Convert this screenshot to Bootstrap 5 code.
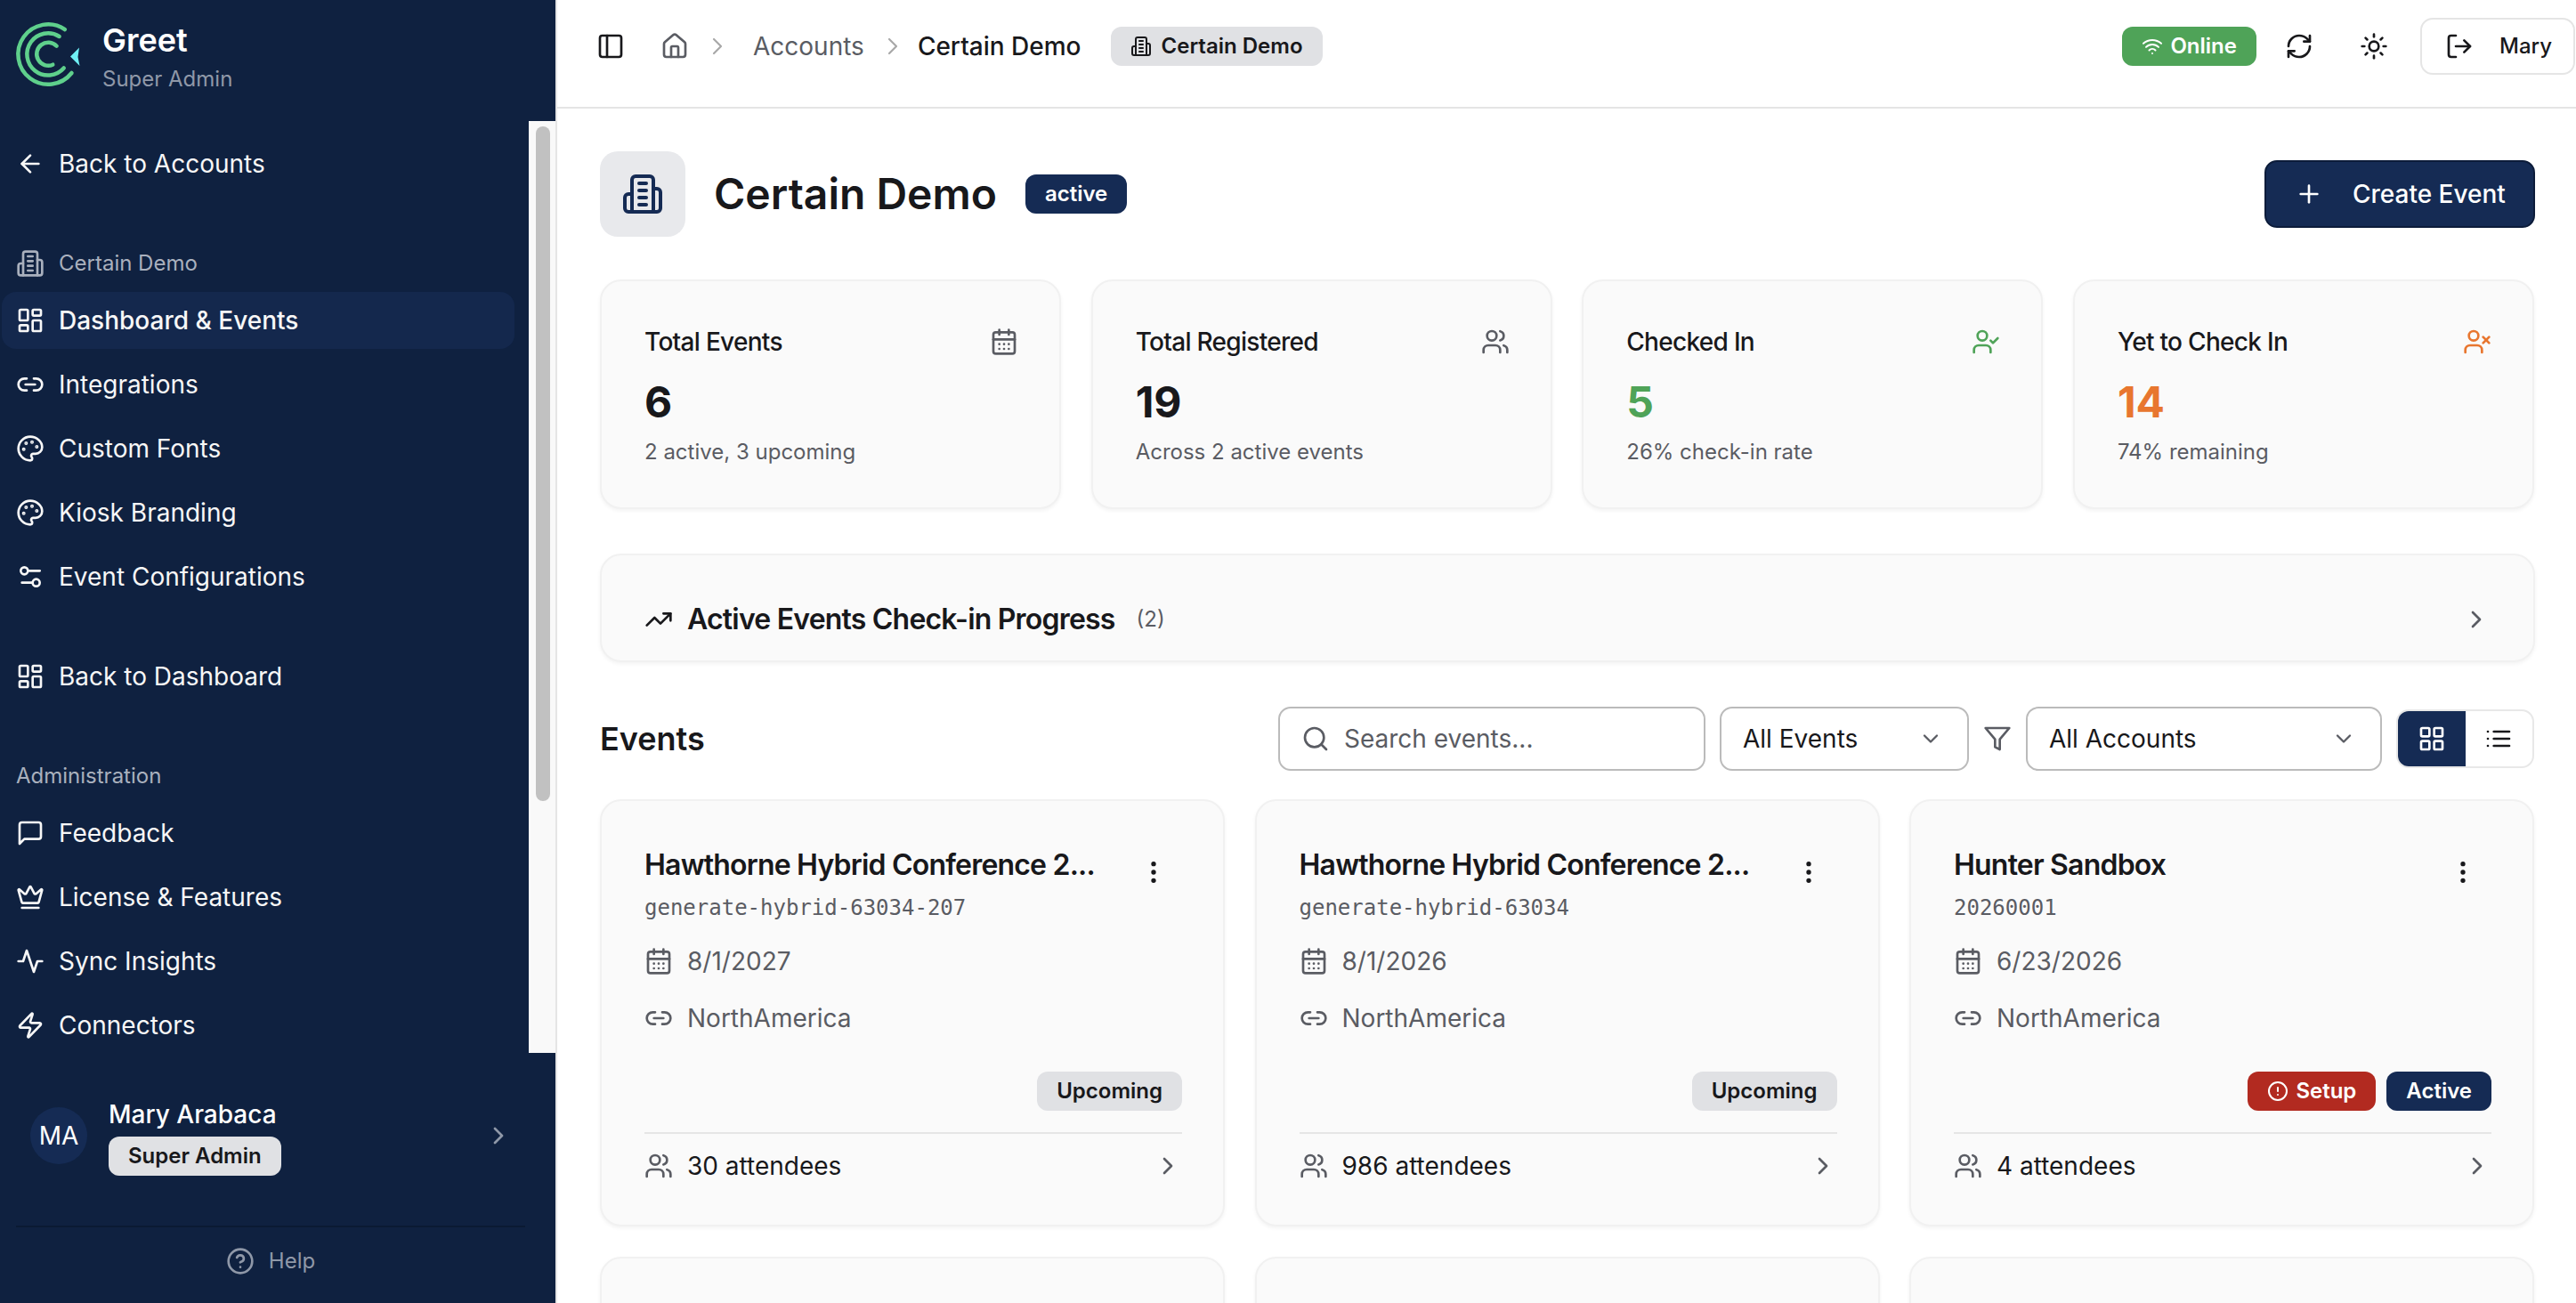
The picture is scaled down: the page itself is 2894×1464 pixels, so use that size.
<!DOCTYPE html>
<html lang="en">
<head>
<meta charset="utf-8">
<title>Certain Demo</title>
<link href="https://cdn.jsdelivr.net/npm/bootstrap@5.3.0/dist/css/bootstrap.min.css" rel="stylesheet">
<style>
html,body{height:100%;margin:0;overflow:hidden;background:#fff;}
body{font-family:Inter,"Noto Sans",sans-serif;font-size:28px;line-height:40px;color:#18181b;}
.ic{width:32px;height:32px;flex:none;fill:none;stroke:currentColor;stroke-width:2;stroke-linecap:round;stroke-linejoin:round;}
.ic-s{width:24px;height:24px;}
.shell{height:1464px;}
.side{width:626px;flex:none;background:#0f2140;border-right:2px solid #e5e5e5;color:#f7f7f7;}
.side-head{height:136px;flex:none;padding:24px 0 0 18px;gap:25px;}
.brand-logo{overflow:visible;flex:none;}
.brand-name{font-size:36px;line-height:44px;font-weight:600;color:#fff;margin-top:-1px;}
.brand-sub{font-size:24px;line-height:36px;color:#8f98a8;margin-top:4px;}
.side-mid{height:1047px;flex:none;overflow:hidden;}
.side-nav{width:594px;padding:16px 16px 0 2px;flex:none;}
.nav-row{height:64px;padding-left:16px;gap:16px;border-radius:16px;margin-bottom:8px;width:576px;white-space:nowrap;}
.nav-row.on{background:#14284d;font-weight:500;}
.nav-label{height:48px;padding-left:16px;gap:16px;margin-bottom:8px;font-size:24px;color:#a9b0bd;}
.gap-top{margin-top:56px;}
.gap-top2{margin-top:48px;}
.track{width:31px;flex:none;background:#f9f9f9;border-left:2px solid #fdfdfd;padding:6px 0 0 6px;}
.thumb{width:16px;height:758px;background:#c1c1c1;border-radius:8px;}
.user-box{height:194px;flex:none;padding:0 48px 8px 34px;}
.avatar{width:64px;height:64px;background:#152b54;border-radius:50%;color:#fff;font-size:28px;font-weight:400;margin-right:24px;}
.user-name{font-size:28px;line-height:40px;font-weight:500;color:#fff;margin-bottom:5px;}
.pill{font-size:24px;line-height:44px;height:44px;padding:0 22px;border-radius:12px;font-weight:600;display:inline-flex;align-items:center;white-space:nowrap;vertical-align:top;}
.pill-grey{background:#e0e1e4;color:#18181b;}
.pill-navy{background:#152b54;color:#fff;}
.pill-green{background:#4fa358;color:#fff;}
.pill-red{background:#b22a20;color:#fff;}
.pill-gap{gap:11px;margin-left:33px;}
.side-foot{margin:0 34px 0 18px;border-top:2px solid #0b1a33;height:85px;flex:none;padding-bottom:7px;color:#8f98a8;font-size:24px;gap:16px;}
.c-muted{color:#8f98a8;}
.main-pane{min-width:0;}
.top-bar{height:122px;flex:none;border-bottom:2px solid #e5e5e5;padding:0 1px 16px 44px;}
.crumb-home{color:#5a5c63;margin-left:40px;}
.crumb-sep{color:#a8a8a8;stroke-width:1.6;}
.crumb-link{color:#5a5c63;white-space:nowrap;}
.crumb-now{color:#18181b;font-weight:500;white-space:nowrap;margin-left:12px;}
.top-tools{gap:12px;}
.icon-slot{width:72px;height:64px;color:#18181b;}
.user-btn{width:174px;height:64px;border:2px solid #e5e5e5;border-radius:14px;padding:0 24px 0 26px;background:#fff;color:#18181b;font-size:24px;line-height:40px;font-weight:500;margin-left:4px;}
.pane-body{padding:48px 46px 0 48px;min-height:0;}
.page-head{height:96px;margin-bottom:48px;}
.head-ico{width:96px;height:96px;background:#e8e9ec;border-radius:20px;color:#152b54;margin-right:32px;}
.head-ico .ic{width:48px;height:48px;}
.page-title{font-size:48px;line-height:60px;font-weight:600;margin:0 32px 0 0;color:#18181b;}
.create-btn{width:304px;height:76px;background:#152b54;border:2px solid #0c1c3a;border-radius:14px;color:#fff;font-size:28px;line-height:40px;font-weight:500;padding:0 0 0 32px;gap:33px;}
.create-btn:hover{background:#152b54;color:#fff;border-color:#0c1c3a;}
.grid-4{display:grid;grid-template-columns:repeat(4,1fr);gap:33.5px;margin:0 1px 50px 0;}
.grid-3{display:grid;grid-template-columns:repeat(3,1fr);gap:33.5px;margin-right:1px;}
.tile{background:#fafafa;border:2px solid #f1f1f1;border-radius:24px;box-shadow:0 2px 4px rgba(0,0,0,.05);}
.stat-tile{height:258px;padding:48px 46px 48px 48px;}
.stat-top{height:40px;font-size:28px;line-height:40px;font-weight:500;letter-spacing:-.7px;}
.stat-num{font-size:48px;line-height:56px;font-weight:700;margin-top:20px;color:#18181b;}
.stat-sub{font-size:24px;line-height:36px;color:#5a5c63;margin-top:10px;}
.c-grey{color:#5a5c63;}
.c-green{color:#4fa358!important;}
.c-orange{color:#e8762f!important;}
.prog-tile{height:122px;padding:48px 48px 0;margin-bottom:50px;}
.prog-title{font-size:32px;line-height:48px;font-weight:600;margin:0 0 0 16px;letter-spacing:-.8px;}
.prog-count{font-size:24px;color:#5a5c63;margin-left:24px;}
.tools{height:72px;margin-bottom:32px;}
.tools-title{font-size:36px;line-height:48px;font-weight:600;margin:0;}
.search-box{width:480px;height:72px;border:2px solid #bbb;border-radius:14px;padding:0 24px;gap:16px;color:#5a5c63;background:#fff;}
.search-box input{border:0;outline:0;background:transparent;font-size:28px;width:100%;padding:0;color:#18181b;box-shadow:none;border-radius:0;}
.search-box input::placeholder{color:#5a5c63;opacity:1;}
.pick{height:72px;border:2px solid #bbb;border-radius:14px;padding:0 27px 0 24px;background:#fff;color:#18181b;font-size:28px;}
.pick .ic{color:#5a5c63;width:28px;height:28px;}
.pick-a{width:280px;}
.pick-b{width:400px;}
.view-tog{width:155px;height:66px;border:2px solid #e8e8e8;border-radius:14px;overflow:hidden;margin:0 1px 0 0;}
.view-tog span{width:76px;}
.view-tog .sel{background:#152b54;color:#fff;}
.ev-tile{height:480px;padding:50px 46px 0 48px;}
.ev-head{height:52px;}
.ev-title{font-size:32px;line-height:44px;font-weight:600;min-width:0;flex:1;color:#18181b;letter-spacing:-.8px;white-space:nowrap;}
.dots{width:64px;padding:14px 0 0 16px;margin-left:24px;flex:none;}
.ev-code{font-family:"DejaVu Sans Mono",monospace;font-size:24px;line-height:36px;color:#5a5c63;margin-bottom:22px;}
.ev-meta{height:40px;gap:16px;color:#5a5c63;font-size:28px;margin-bottom:24px;}
.ev-tags{height:44px;margin-top:16px;gap:12px;}
.ev-foot{margin-top:24px;border-top:2px solid #e5e5e5;padding-top:16px;height:58px;gap:16px;}
.ev-stub{height:480px;}
</style>
</head>
<body>
<svg class="d-none" xmlns="http://www.w3.org/2000/svg">
<symbol id="i-back" viewBox="0 0 24 24"><path d="m12 19-7-7 7-7"/><path d="M19 12H5"/></symbol>
<symbol id="i-build" viewBox="0 0 24 24"><path d="M6 22V4a2 2 0 0 1 2-2h8a2 2 0 0 1 2 2v18Z"/><path d="M6 12H4a2 2 0 0 0-2 2v6a2 2 0 0 0 2 2h2"/><path d="M18 9h2a2 2 0 0 1 2 2v9a2 2 0 0 1-2 2h-2"/><path d="M10 6h4"/><path d="M10 10h4"/><path d="M10 14h4"/><path d="M10 18h4"/></symbol>
<symbol id="i-dash" viewBox="0 0 24 24"><rect width="7" height="9" x="3" y="3" rx="1"/><rect width="7" height="5" x="14" y="3" rx="1"/><rect width="7" height="9" x="14" y="12" rx="1"/><rect width="7" height="5" x="3" y="16" rx="1"/></symbol>
<symbol id="i-link" viewBox="0 0 24 24"><path d="M9 17H7A5 5 0 0 1 7 7h2"/><path d="M15 7h2a5 5 0 1 1 0 10h-2"/><line x1="8" x2="16" y1="12" y2="12"/></symbol>
<symbol id="i-palette" viewBox="0 0 24 24"><circle cx="13.5" cy="6.5" r=".5" fill="currentColor"/><circle cx="17.5" cy="10.5" r=".5" fill="currentColor"/><circle cx="8.5" cy="7.5" r=".5" fill="currentColor"/><circle cx="6.5" cy="12.5" r=".5" fill="currentColor"/><path d="M12 2C6.5 2 2 6.5 2 12s4.5 10 10 10c.926 0 1.648-.746 1.648-1.688 0-.437-.18-.835-.437-1.125-.29-.289-.438-.652-.438-1.125a1.64 1.64 0 0 1 1.668-1.668h1.996c3.051 0 5.555-2.503 5.555-5.554C21.965 6.012 17.461 2 12 2z"/></symbol>
<symbol id="i-sliders" viewBox="0 0 24 24"><path d="M20 7h-9"/><path d="M14 17H5"/><circle cx="17" cy="17" r="3"/><circle cx="7" cy="7" r="3"/></symbol>
<symbol id="i-msg" viewBox="0 0 24 24"><path d="M21 15a2 2 0 0 1-2 2H7l-4 4V5a2 2 0 0 1 2-2h14a2 2 0 0 1 2 2z"/></symbol>
<symbol id="i-crown" viewBox="0 0 24 24"><path d="M11.562 3.266a.5.5 0 0 1 .876 0L15.39 8.87a1 1 0 0 0 1.516.294L21.183 5.5a.5.5 0 0 1 .798.519l-2.834 10.246a1 1 0 0 1-.956.734H5.81a1 1 0 0 1-.957-.734L2.02 6.02a.5.5 0 0 1 .798-.519l4.276 3.664a1 1 0 0 0 1.516-.294z"/><path d="M5 21h14"/></symbol>
<symbol id="i-pulse" viewBox="0 0 24 24"><path d="M22 12h-4l-3 9L9 3l-3 9H2"/></symbol>
<symbol id="i-zap" viewBox="0 0 24 24"><path d="M4 14a1 1 0 0 1-.78-1.63l9.9-10.2a.5.5 0 0 1 .86.46l-1.92 6.02A1 1 0 0 0 13 10h7a1 1 0 0 1 .78 1.63l-9.9 10.2a.5.5 0 0 1-.86-.46l1.92-6.02A1 1 0 0 0 11 14z"/></symbol>
<symbol id="i-right" viewBox="0 0 24 24"><path d="m9 18 6-6-6-6"/></symbol>
<symbol id="i-help" viewBox="0 0 24 24"><circle cx="12" cy="12" r="10"/><path d="M9.09 9a3 3 0 0 1 5.83 1c0 2-3 3-3 3"/><path d="M12 17h.01"/></symbol>
<symbol id="i-panel" viewBox="0 0 24 24"><rect width="18" height="18" x="3" y="3" rx="2"/><path d="M9 3v18"/></symbol>
<symbol id="i-home" viewBox="0 0 24 24"><path d="M15 21v-8a1 1 0 0 0-1-1h-4a1 1 0 0 0-1 1v8"/><path d="M3 10a2 2 0 0 1 .709-1.528l7-5.999a2 2 0 0 1 2.582 0l7 5.999A2 2 0 0 1 21 10v9a2 2 0 0 1-2 2H5a2 2 0 0 1-2-2z"/></symbol>
<symbol id="i-wifi" viewBox="0 0 24 24"><path d="M12 20h.01"/><path d="M2 8.82a15 15 0 0 1 20 0"/><path d="M5 12.859a10 10 0 0 1 14 0"/><path d="M8.5 16.429a5 5 0 0 1 7 0"/></symbol>
<symbol id="i-refresh" viewBox="0 0 24 24"><path d="M3 12a9 9 0 0 1 9-9 9.75 9.75 0 0 1 6.74 2.74L21 8"/><path d="M21 3v5h-5"/><path d="M21 12a9 9 0 0 1-9 9 9.75 9.75 0 0 1-6.74-2.74L3 16"/><path d="M8 16H3v5"/></symbol>
<symbol id="i-sun" viewBox="0 0 24 24"><circle cx="12" cy="12" r="4"/><path d="M12 2v2"/><path d="M12 20v2"/><path d="m4.93 4.93 1.41 1.41"/><path d="m17.66 17.66 1.41 1.41"/><path d="M2 12h2"/><path d="M20 12h2"/><path d="m6.34 17.66-1.41 1.41"/><path d="m19.07 4.93-1.41 1.41"/></symbol>
<symbol id="i-logout" viewBox="0 0 24 24"><path d="M9 21H5a2 2 0 0 1-2-2V5a2 2 0 0 1 2-2h4"/><polyline points="16 17 21 12 16 7"/><line x1="21" x2="9" y1="12" y2="12"/></symbol>
<symbol id="i-plus" viewBox="0 0 24 24"><path d="M5 12h14"/><path d="M12 5v14"/></symbol>
<symbol id="i-cal" viewBox="0 0 24 24"><path d="M8 2v4"/><path d="M16 2v4"/><rect width="18" height="18" x="3" y="4" rx="2"/><path d="M3 10h18"/><path d="M8 14h.01"/><path d="M12 14h.01"/><path d="M16 14h.01"/><path d="M8 18h.01"/><path d="M12 18h.01"/><path d="M16 18h.01"/></symbol>
<symbol id="i-users" viewBox="0 0 24 24"><path d="M16 21v-2a4 4 0 0 0-4-4H6a4 4 0 0 0-4 4v2"/><circle cx="9" cy="7" r="4"/><path d="M22 21v-2a4 4 0 0 0-3-3.87"/><path d="M16 3.13a4 4 0 0 1 0 7.75"/></symbol>
<symbol id="i-ucheck" viewBox="0 0 24 24"><path d="M16 21v-2a4 4 0 0 0-4-4H6a4 4 0 0 0-4 4v2"/><circle cx="9" cy="7" r="4"/><polyline points="16 11 18 13 22 9"/></symbol>
<symbol id="i-ux" viewBox="0 0 24 24"><path d="M16 21v-2a4 4 0 0 0-4-4H6a4 4 0 0 0-4 4v2"/><circle cx="9" cy="7" r="4"/><line x1="17" x2="22" y1="8" y2="13"/><line x1="22" x2="17" y1="8" y2="13"/></symbol>
<symbol id="i-trend" viewBox="0 0 24 24"><polyline points="22 7 13.5 15.5 8.5 10.5 2 17"/><polyline points="16 7 22 7 22 13"/></symbol>
<symbol id="i-search" viewBox="0 0 24 24"><circle cx="11" cy="11" r="8"/><path d="m21 21-4.3-4.3"/></symbol>
<symbol id="i-down" viewBox="0 0 24 24"><path d="m6 9 6 6 6-6"/></symbol>
<symbol id="i-filter" viewBox="0 0 24 24"><polygon points="22 3 2 3 10 12.46 10 19 14 21 14 12.46 22 3"/></symbol>
<symbol id="i-list" viewBox="0 0 24 24"><path d="M3 12h.01"/><path d="M3 18h.01"/><path d="M3 6h.01"/><path d="M8 12h13"/><path d="M8 18h13"/><path d="M8 6h13"/></symbol>
<symbol id="i-grid" viewBox="0 0 24 24"><rect width="7" height="7" x="3" y="3" rx="1"/><rect width="7" height="7" x="14" y="3" rx="1"/><rect width="7" height="7" x="14" y="14" rx="1"/><rect width="7" height="7" x="3" y="14" rx="1"/></symbol>
<symbol id="i-dots" viewBox="0 0 24 24"><circle cx="12" cy="12" r="1"/><circle cx="12" cy="5" r="1"/><circle cx="12" cy="19" r="1"/></symbol>
<symbol id="i-alert" viewBox="0 0 24 24"><circle cx="12" cy="12" r="10"/><line x1="12" x2="12" y1="8" y2="12"/><line x1="12" x2="12.01" y1="16" y2="16"/></symbol>
</svg>

<div class="d-flex shell">
  <aside class="side d-flex flex-column">
    <div class="side-head d-flex">
      <svg class="brand-logo" width="72" height="72" viewBox="0 0 72 72" fill="none" stroke="#5fd08c" stroke-width="4.500" stroke-linecap="round">
        <path d="M54.900 9.100A33.700 33.700 0 1 0 62.500 58"/>
        <path d="M48.600 17A23.600 23.600 0 1 0 53.700 52.500"/>
        <path d="M45.600 27.700A13 13 0 1 0 41.300 48.700"/>
        <polygon points="61,39.500 71,29.500 69.500,40 71.500,50" fill="#6ff0f5" stroke="none"/>
      </svg>
      <div>
        <div class="brand-name">Greet</div>
        <div class="brand-sub">Super Admin</div>
      </div>
    </div>
    <div class="side-mid d-flex">
      <nav class="side-nav">
        <div class="nav-row d-flex align-items-center"><svg class="ic"><use href="#i-back"/></svg>Back to Accounts</div>
        <div class="nav-label d-flex align-items-center gap-top"><svg class="ic"><use href="#i-build"/></svg>Certain Demo</div>
        <div class="nav-row on d-flex align-items-center"><svg class="ic"><use href="#i-dash"/></svg>Dashboard &amp; Events</div>
        <div class="nav-row d-flex align-items-center"><svg class="ic"><use href="#i-link"/></svg>Integrations</div>
        <div class="nav-row d-flex align-items-center"><svg class="ic"><use href="#i-palette"/></svg>Custom Fonts</div>
        <div class="nav-row d-flex align-items-center"><svg class="ic"><use href="#i-palette"/></svg>Kiosk Branding</div>
        <div class="nav-row d-flex align-items-center"><svg class="ic"><use href="#i-sliders"/></svg>Event Configurations</div>
        <div class="nav-row d-flex align-items-center gap-top2"><svg class="ic"><use href="#i-dash"/></svg>Back to Dashboard</div>
        <div class="nav-label d-flex align-items-center gap-top">Administration</div>
        <div class="nav-row d-flex align-items-center"><svg class="ic"><use href="#i-msg"/></svg>Feedback</div>
        <div class="nav-row d-flex align-items-center"><svg class="ic"><use href="#i-crown"/></svg>License &amp; Features</div>
        <div class="nav-row d-flex align-items-center"><svg class="ic"><use href="#i-pulse"/></svg>Sync Insights</div>
        <div class="nav-row d-flex align-items-center"><svg class="ic"><use href="#i-zap"/></svg>Connectors</div>
      </nav>
      <div class="track"><div class="thumb"></div></div>
    </div>
    <div class="user-box d-flex align-items-center">
      <div class="avatar d-flex align-items-center justify-content-center flex-none">MA</div>
      <div class="flex-grow-1">
        <div class="user-name">Mary Arabaca</div>
        <span class="badge pill pill-grey">Super Admin</span>
      </div>
      <svg class="ic c-muted"><use href="#i-right"/></svg>
    </div>
    <div class="side-foot d-flex align-items-center justify-content-center"><svg class="ic"><use href="#i-help"/></svg>Help</div>
  </aside>

  <main class="main-pane flex-grow-1 d-flex flex-column">
    <header class="top-bar d-flex align-items-center">
      <svg class="ic"><use href="#i-panel"/></svg>
      <svg class="ic crumb-home"><use href="#i-home"/></svg>
      <svg class="ic crumb-sep ms-3"><use href="#i-right"/></svg>
      <span class="crumb-link ms-4">Accounts</span>
      <svg class="ic crumb-sep ms-3"><use href="#i-right"/></svg>
      <span class="crumb-now">Certain Demo</span>
      <span class="badge pill pill-grey pill-gap"><svg class="ic ic-s"><use href="#i-build"/></svg>Certain Demo</span>
      <div class="ms-auto d-flex align-items-center top-tools">
        <span class="badge pill pill-green gap-2"><svg class="ic ic-s"><use href="#i-wifi"/></svg>Online</span>
        <span class="icon-slot d-flex align-items-center justify-content-center"><svg class="ic"><use href="#i-refresh"/></svg></span>
        <span class="icon-slot d-flex align-items-center justify-content-center"><svg class="ic"><use href="#i-sun"/></svg></span>
        <button class="btn user-btn d-flex align-items-center justify-content-between" type="button"><svg class="ic"><use href="#i-logout"/></svg>Mary</button>
      </div>
    </header>

    <div class="pane-body flex-grow-1 overflow-hidden">
      <div class="page-head d-flex align-items-center">
        <div class="head-ico d-flex align-items-center justify-content-center"><svg class="ic"><use href="#i-build"/></svg></div>
        <h1 class="page-title">Certain Demo</h1>
        <span class="badge pill pill-navy">active</span>
        <button class="btn create-btn ms-auto d-flex align-items-center" type="button"><svg class="ic"><use href="#i-plus"/></svg>Create Event</button>
      </div>

      <div class="grid-4">
        <div class="card tile stat-tile">
          <div class="stat-top d-flex justify-content-between align-items-center">Total Events<svg class="ic c-grey"><use href="#i-cal"/></svg></div>
          <div class="stat-num">6</div>
          <div class="stat-sub">2 active, 3 upcoming</div>
        </div>
        <div class="card tile stat-tile">
          <div class="stat-top d-flex justify-content-between align-items-center">Total Registered<svg class="ic c-grey"><use href="#i-users"/></svg></div>
          <div class="stat-num">19</div>
          <div class="stat-sub">Across 2 active events</div>
        </div>
        <div class="card tile stat-tile">
          <div class="stat-top d-flex justify-content-between align-items-center">Checked In<svg class="ic c-green"><use href="#i-ucheck"/></svg></div>
          <div class="stat-num c-green">5</div>
          <div class="stat-sub">26% check-in rate</div>
        </div>
        <div class="card tile stat-tile">
          <div class="stat-top d-flex justify-content-between align-items-center">Yet to Check In<svg class="ic c-orange"><use href="#i-ux"/></svg></div>
          <div class="stat-num c-orange">14</div>
          <div class="stat-sub">74% remaining</div>
        </div>
      </div>

      <div class="card tile prog-tile">
        <div class="d-flex align-items-center">
          <svg class="ic"><use href="#i-trend"/></svg>
          <h2 class="prog-title">Active Events Check-in Progress</h2>
          <span class="prog-count">(2)</span>
          <svg class="ic c-grey ms-auto"><use href="#i-right"/></svg>
        </div>
      </div>

      <div class="tools d-flex align-items-center">
        <h2 class="tools-title">Events</h2>
        <div class="ms-auto d-flex align-items-center gap-3">
          <div class="search-box d-flex align-items-center"><svg class="ic"><use href="#i-search"/></svg><input class="form-control" type="text" placeholder="Search events..."></div>
          <div class="pick pick-a d-flex align-items-center justify-content-between">All Events<svg class="ic"><use href="#i-down"/></svg></div>
          <svg class="ic c-grey"><use href="#i-filter"/></svg>
          <div class="pick pick-b d-flex align-items-center justify-content-between">All Accounts<svg class="ic"><use href="#i-down"/></svg></div>
          <div class="view-tog d-flex">
            <span class="sel d-flex align-items-center justify-content-center"><svg class="ic"><use href="#i-grid"/></svg></span>
            <span class="d-flex align-items-center justify-content-center"><svg class="ic"><use href="#i-list"/></svg></span>
          </div>
        </div>
      </div>

      <div class="grid-3">
        <div class="card tile ev-tile">
          <div class="ev-head d-flex"><div class="ev-title">Hawthorne Hybrid Conference 2...</div><div class="dots d-flex align-items-start"><svg class="ic"><use href="#i-dots"/></svg></div></div>
          <div class="ev-code">generate-hybrid-63034-207</div>
          <div class="ev-meta d-flex align-items-center"><svg class="ic"><use href="#i-cal"/></svg>8/1/2027</div>
          <div class="ev-meta d-flex align-items-center"><svg class="ic"><use href="#i-link"/></svg>NorthAmerica</div>
          <div class="ev-tags d-flex justify-content-end"><span class="badge pill pill-grey">Upcoming</span></div>
          <div class="ev-foot d-flex align-items-center"><svg class="ic c-grey"><use href="#i-users"/></svg>30 attendees<svg class="ic c-grey ms-auto"><use href="#i-right"/></svg></div>
        </div>
        <div class="card tile ev-tile">
          <div class="ev-head d-flex"><div class="ev-title">Hawthorne Hybrid Conference 2...</div><div class="dots d-flex align-items-start"><svg class="ic"><use href="#i-dots"/></svg></div></div>
          <div class="ev-code">generate-hybrid-63034</div>
          <div class="ev-meta d-flex align-items-center"><svg class="ic"><use href="#i-cal"/></svg>8/1/2026</div>
          <div class="ev-meta d-flex align-items-center"><svg class="ic"><use href="#i-link"/></svg>NorthAmerica</div>
          <div class="ev-tags d-flex justify-content-end"><span class="badge pill pill-grey">Upcoming</span></div>
          <div class="ev-foot d-flex align-items-center"><svg class="ic c-grey"><use href="#i-users"/></svg>986 attendees<svg class="ic c-grey ms-auto"><use href="#i-right"/></svg></div>
        </div>
        <div class="card tile ev-tile">
          <div class="ev-head d-flex"><div class="ev-title">Hunter Sandbox</div><div class="dots d-flex align-items-start"><svg class="ic"><use href="#i-dots"/></svg></div></div>
          <div class="ev-code">20260001</div>
          <div class="ev-meta d-flex align-items-center"><svg class="ic"><use href="#i-cal"/></svg>6/23/2026</div>
          <div class="ev-meta d-flex align-items-center"><svg class="ic"><use href="#i-link"/></svg>NorthAmerica</div>
          <div class="ev-tags d-flex justify-content-end">
            <span class="badge pill pill-red gap-2"><svg class="ic ic-s"><use href="#i-alert"/></svg>Setup</span>
            <span class="badge pill pill-navy">Active</span>
          </div>
          <div class="ev-foot d-flex align-items-center"><svg class="ic c-grey"><use href="#i-users"/></svg>4 attendees<svg class="ic c-grey ms-auto"><use href="#i-right"/></svg></div>
        </div>
        <div class="card tile ev-stub"></div>
        <div class="card tile ev-stub"></div>
        <div class="card tile ev-stub"></div>
      </div>
    </div>
  </main>
</div>
<script src="https://cdn.jsdelivr.net/npm/bootstrap@5.3.0/dist/js/bootstrap.bundle.min.js"></script>
</body>
</html>
